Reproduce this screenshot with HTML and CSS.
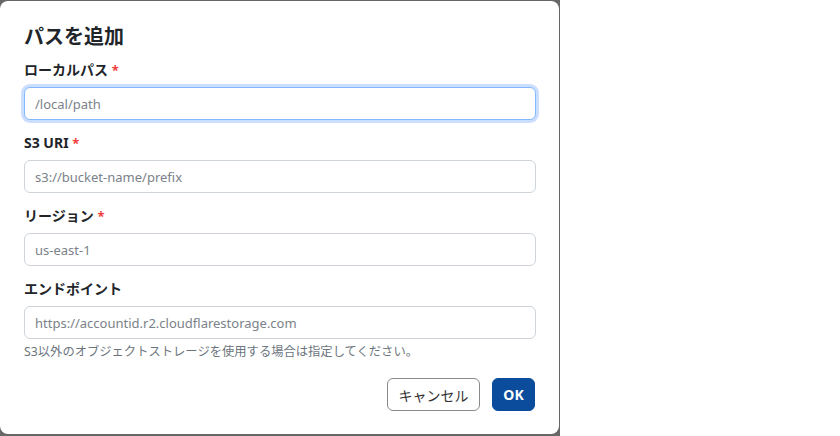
FILE: index.html
```html
<!DOCTYPE html>
<html lang="ja">
<head>
    <meta charset="UTF-8">
    <meta name="viewport" content="width=device-width, initial-scale=1.0">
    <title>パスを追加</title>
    <link rel="stylesheet" href="styles.css">
</head>
<body>
<div class="backdrop">
    <div class="modal">
        <h2 class="modal-title">パスを追加</h2>
        <div class="field">
            <label class="label">ローカルパス <span class="req">*</span></label>
            <input class="input focus" type="text" placeholder="/local/path">
        </div>
        <div class="field">
            <label class="label">S3 URI <span class="req">*</span></label>
            <input class="input" type="text" placeholder="s3://bucket-name/prefix">
        </div>
        <div class="field">
            <label class="label">リージョン <span class="req">*</span></label>
            <input class="input" type="text" placeholder="us-east-1">
        </div>
        <div class="field last">
            <label class="label">エンドポイント</label>
            <input class="input" type="text" placeholder="https://accountid.r2.cloudflarestorage.com">
            <p class="help">S3以外のオブジェクトストレージを使用する場合は指定してください。</p>
        </div>
        <div class="buttons">
            <button class="btn cancel">キャンセル</button>
            <button class="btn ok">OK</button>
        </div>
    </div>
</div>
</body>
</html>
```

FILE: styles.css
```css
*{
    margin: 0;
    padding: 0;
    box-sizing: border-box;
}
body{
    background: #fff;
    font-family: "Noto Sans", "Noto Sans CJK JP", sans-serif;
    color: #212529;
}
.backdrop{
    width: 560px;
    height: 436px;
    background: #676767;
    padding-top: 1px;
}
.modal{
    background: #fff;
    width: 559px;
    height: 433px;
    border-radius: 8px;
    padding: 21px 24px 0 24px;
}
.modal-title{
    font-size: 20px;
    line-height: 30px;
    font-weight: 700;
    margin-bottom: 8px;
}
.field{
    display: flex;
    flex-direction: column;
    margin-bottom: 13px;
}
.label{
    font-size: 14px;
    line-height: 20px;
    font-weight: 700;
    margin-bottom: 7px;
}
.req{
    color: #f03e3e;
    font-size: 13px;
}
.input{
    width: 512px;
    height: 33px;
    border: 1px solid #ced4da;
    border-radius: 6px;
    padding: 0 10px;
    font-family: inherit;
    font-size: 13px;
    color: #212529;
    outline: none;
}
.input::placeholder{
    color: #7b8289;
}
.input.focus{
    border-color: #86b7fe;
    box-shadow: 0 0 0 3px rgba(13, 110, 253, 0.22);
}
.field.last{
    margin-bottom: 0;
}
.help{
    font-size: 12.3px;
    line-height: 16px;
    color: #6c757d;
    margin-top: 5px;
}
.buttons{
    display: flex;
    justify-content: flex-end;
    gap: 12px;
    margin-top: 18px;
}
.btn{
    height: 33px;
    border-radius: 6px;
    font-family: inherit;
    font-size: 14px;
    cursor: pointer;
}
.cancel{
    width: 93px;
    background: #fff;
    border: 1px solid #8a8a8a;
    color: #333;
}
.ok{
    width: 43px;
    background: #0b4c9c;
    border: 1px solid #0b4c9c;
    color: #fff;
    font-weight: 700;
}
```
